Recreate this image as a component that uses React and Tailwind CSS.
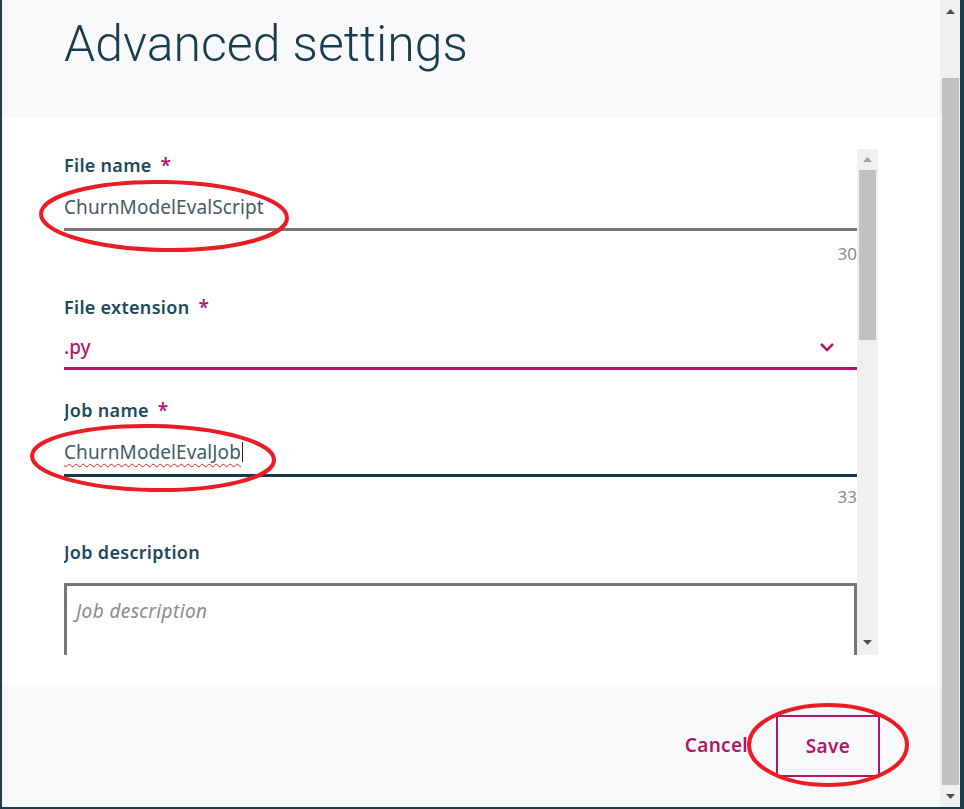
import React from 'react';

const MAGENTA = '#b0186b';

// Small triangle used by the fake scrollbars
const Arrow = ({ dir = 'up', color = '#505050' }) => (
  <svg width="9" height="5" viewBox="0 0 9 5" className="block">
    {dir === 'up' ? (
      <path d="M0 5 L4.5 0 L9 5 Z" fill={color} />
    ) : (
      <path d="M0 0 L4.5 5 L9 0 Z" fill={color} />
    )}
  </svg>
);

const Label = ({ children, required }) => (
  <div className="text-[18px] font-semibold leading-[22px] tracking-[0.3px] text-[#1c4a5d]">
    {children}
    {required && <span className="ml-[9px] text-[19px] text-[#b0186b]">*</span>}
  </div>
);

const App = () => {
  return (
    <div
      className="relative flex h-[809px] w-[964px] overflow-hidden border-b-2 border-l-2 border-r-4 border-[#1f3c49] bg-white"
      style={{ fontFamily: '"Noto Sans", Lato, sans-serif' }}
    >
      {/* Main dialog column */}
      <div className="flex min-w-0 flex-1 flex-col">
        {/* Header */}
        <div className="h-[118px] bg-[#f9f9fb] pl-[62px] pt-[14px]">
          <h1
            className="text-[50px] font-light leading-[60px] text-[#163d50]"
            style={{ fontFamily: 'Roboto, "Liberation Sans", sans-serif' }}
          >
            Advanced settings
          </h1>
        </div>

        {/* Body */}
        <div className="h-[567px] bg-white pl-[62px] pt-[31px]">
          <div className="flex h-[506px]">
            {/* Form */}
            <div className="w-[793px] overflow-hidden">
              <div className="pt-[5px]">
                <Label required>File name</Label>
                <div className="mt-[19px] text-[19px] leading-[24px] tracking-[0.1px] text-[#435a69]">
                  ChurnModelEvalScript
                </div>
                <div className="mt-[9px] h-[3px] bg-[#767676]" />
                <div className="mt-[13px] text-right text-[17px] leading-[20px] text-[#8d8d8d]">30</div>
              </div>

              <div className="mt-[32px]">
                <Label required>File extension</Label>
                <div className="mt-[17px] flex items-center justify-between pr-[22px]">
                  <span className="text-[19px] font-medium leading-[24px] text-[#b0186b]">.py</span>
                  <svg width="16" height="10" viewBox="0 0 16 10">
                    <path d="M2 2 L8 8 L14 2" fill="none" stroke={MAGENTA} strokeWidth="2.5" />
                  </svg>
                </div>
                <div className="mt-[8px] h-[3px] bg-[#b0186b]" />
              </div>

              <div className="mt-[29px]">
                <Label required>Job name</Label>
                <div className="mt-[19px] flex h-[24px] items-center text-[19px] leading-[24px] tracking-[0.1px] text-[#435a69]">
                  <span className="underline decoration-wavy decoration-[#e02020] decoration-1 underline-offset-[4px]">
                    ChurnModelEvalJob
                  </span>
                  <span className="ml-[1px] h-[20px] w-[1px] bg-[#222]" />
                </div>
                <div className="mt-[10px] h-[3px] bg-[#15384a]" />
                <div className="mt-[10px] text-right text-[17px] leading-[20px] text-[#8d8d8d]">33</div>
              </div>

              <div className="mt-[34px]">
                <Label>Job description</Label>
                <div className="mt-[20px] h-[100px] border-[3px] border-[#767676] px-[9px] pt-[11px]">
                  <span className="text-[19px] italic tracking-[0.4px] text-[#8c8c8c]">Job description</span>
                </div>
              </div>
            </div>

            {/* Inner scrollbar */}
            <div className="flex w-[21px] flex-col items-center bg-[#f0f0f0]">
              <div className="flex h-[21px] items-center justify-center">
                <Arrow dir="up" color="#a3a3a3" />
              </div>
              <div className="h-[170px] w-[17px] bg-[#c1c1c1]" />
              <div className="flex-1" />
              <div className="flex h-[21px] items-center justify-center pb-[4px]">
                <Arrow dir="down" />
              </div>
            </div>
          </div>
        </div>

        {/* Footer */}
        <div className="flex flex-1 items-start justify-end bg-[#f9f9fb] pr-[60px] pt-[30px]">
          <button className="mr-[28px] mt-[14px] text-[19px] font-semibold leading-[32px] tracking-[0.3px] text-[#b0186b]">
            Cancel
          </button>
          <button className="h-[62px] w-[104px] border-2 border-[#b0186b] text-[19px] font-semibold tracking-[0.3px] text-[#b0186b]">
            Save
          </button>
        </div>
      </div>

      {/* Outer scrollbar */}
      <div className="flex w-[20px] flex-col items-center bg-[#f0f0f0]">
        <div className="flex h-[22px] items-center justify-center">
          <Arrow dir="up" />
        </div>
        <div className="mt-[56px] h-[707px] w-[17px] bg-[#c1c1c1]" />
        <div className="flex flex-1 items-center justify-center">
          <Arrow dir="down" />
        </div>
      </div>

      {/* Red annotation ellipses drawn over the screenshot */}
      <svg className="pointer-events-none absolute left-[-2px] top-0" width="964" height="809">
        <ellipse cx="164" cy="216" rx="123" ry="34" fill="none" stroke="#ec1c24" strokeWidth="4" transform="rotate(1 164 216)" />
        <ellipse cx="153" cy="458" rx="121" ry="32" fill="none" stroke="#ec1c24" strokeWidth="4" transform="rotate(1 153 458)" />
        <ellipse cx="828" cy="745" rx="79" ry="40" fill="none" stroke="#ec1c24" strokeWidth="4" />
      </svg>
    </div>
  );
};

export default App;
